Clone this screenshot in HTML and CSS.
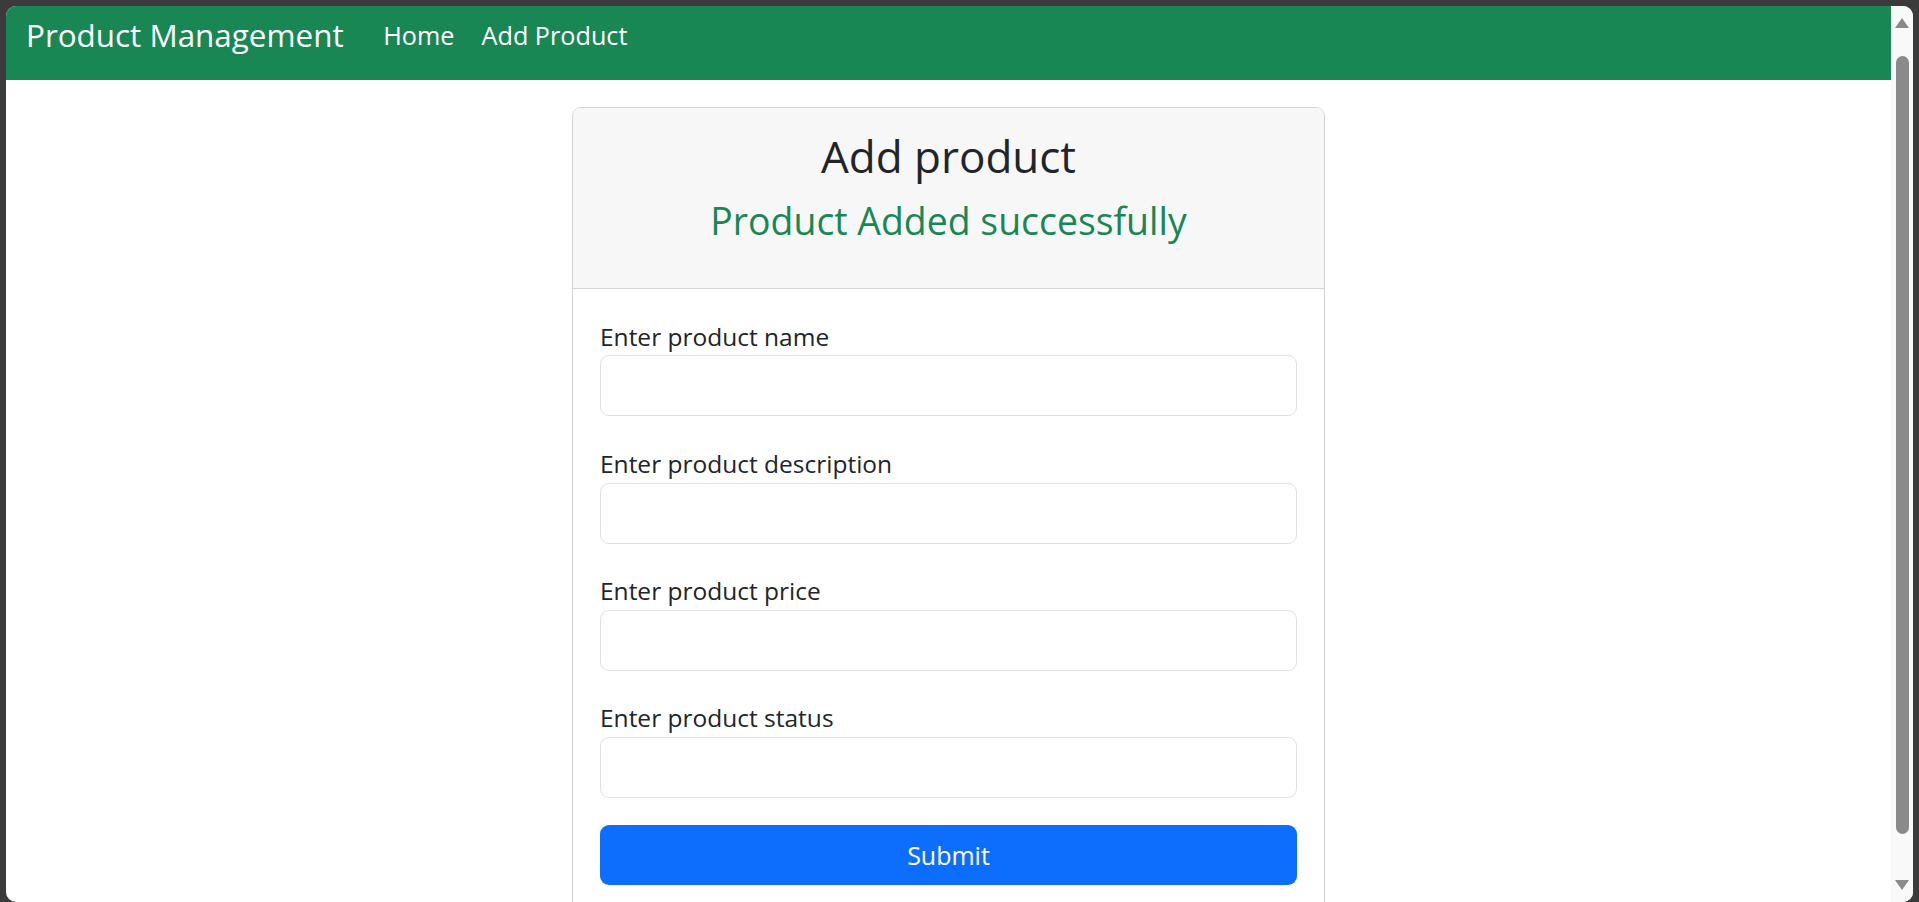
FILE: index.html
```html
<!DOCTYPE html>
<html lang="en">
<head>
<meta charset="utf-8">
<title>Product Management</title>
<link rel="stylesheet" href="styles.css">
</head>
<body>
<div class="window">
  <div class="viewport">
    <nav class="navbar">
      <a class="brand" href="#">Product Management</a>
      <a class="nav-link" href="#">Home</a>
      <a class="nav-link" href="#">Add Product</a>
    </nav>
    <main class="content">
      <div class="card">
        <div class="card-header">
          <h2 class="title">Add product</h2>
          <h4 class="success">Product Added successfully</h4>
        </div>
        <form class="card-body">
          <div class="group">
            <label class="label">Enter product name</label>
            <input class="input" type="text">
          </div>
          <div class="group">
            <label class="label">Enter product description</label>
            <input class="input" type="text">
          </div>
          <div class="group">
            <label class="label">Enter product price</label>
            <input class="input" type="text">
          </div>
          <div class="group">
            <label class="label">Enter product status</label>
            <input class="input" type="text">
          </div>
          <button class="submit" type="button">Submit</button>
        </form>
      </div>
    </main>
  </div>
  <div class="scrollbar">
    <div class="arrow-up"></div>
    <div class="thumb"></div>
    <div class="arrow-down"></div>
  </div>
</div>
</body>
</html>
```
FILE: styles.css
```css
* { box-sizing: border-box; }
html, body { margin: 0; padding: 0; height: 902px; overflow: hidden; }
body {
  background: #3b3b3b;
  font-family: "Open Sans", "Noto Sans", sans-serif;
  padding: 6px 6px 0 6px;
}
.window {
  height: 896px;
  border-radius: 10px;
  overflow: hidden;
  display: flex;
  background: #fff;
}
.viewport {
  flex: 1;
  overflow: hidden;
  display: flex;
  flex-direction: column;
}
.navbar {
  height: 74px;
  flex: none;
  background: #198754;
  display: flex;
  align-items: flex-start;
  padding: 6px 0 0 20px;
}
.brand {
  color: #fff;
  text-decoration: none;
  font-size: 31.4px;
  line-height: 46px;
  margin-right: 26px;
}
.nav-link {
  color: #fff;
  text-decoration: none;
  font-size: 25.2px;
  line-height: 36px;
  margin-top: 5px;
  padding: 0 13.6px;
}
.content {
  padding-top: 27px;
}
.card {
  width: 753px;
  margin: 0 auto;
  border: 1px solid #d3d3d3;
  border-radius: 9px;
  overflow: hidden;
}
.card-header {
  background: #f7f7f7;
  border-bottom: 1px solid #d3d3d3;
  text-align: center;
  padding: 22px 24px 44px;
}
.title {
  margin: 0 0 16px;
  font-size: 44px;
  font-weight: 400;
  line-height: 1.2;
  color: #212529;
}
.success {
  margin: 0;
  font-size: 37.4px;
  font-weight: 400;
  line-height: 1.2;
  color: #198754;
}
.card-body {
  padding: 30px 27px 30px;
  display: flex;
  flex-direction: column;
}
.group {
  display: flex;
  flex-direction: column;
  margin-bottom: 29.5px;
}
.group:last-of-type { margin-bottom: 27px; }
.label {
  font-size: 24.5px;
  line-height: 36.75px;
  color: #212529;
}
.input {
  height: 61px;
  border: 1px solid #dee2e6;
  border-radius: 9px;
  background: #fff;
  font-family: inherit;
  font-size: 24.5px;
  padding: 0 18px;
}
.submit {
  height: 60px;
  border: none;
  border-radius: 9px;
  background: #0d6efd;
  color: #fff;
  font-family: inherit;
  font-size: 25px;
  padding: 0;
}
.scrollbar {
  width: 22px;
  flex: none;
  background: #f9f9f9;
  display: flex;
  flex-direction: column;
  align-items: center;
  padding-top: 12px;
}
.arrow-up {
  width: 0; height: 0;
  border-left: 7px solid transparent;
  border-right: 7px solid transparent;
  border-bottom: 10px solid #8a8a8a;
}
.thumb {
  width: 13px;
  height: 778px;
  margin-top: 28px;
  border-radius: 7px;
  background: #8a8a8a;
}
.arrow-down {
  margin-top: 46px;
  width: 0; height: 0;
  border-left: 7px solid transparent;
  border-right: 7px solid transparent;
  border-top: 10px solid #8a8a8a;
}
```
